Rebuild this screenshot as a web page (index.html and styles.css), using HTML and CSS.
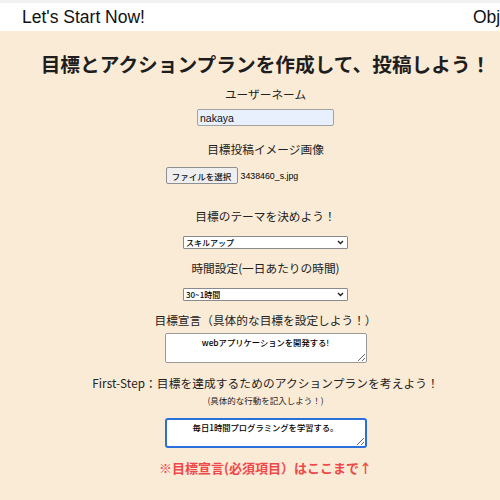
FILE: index.html
```html
<!DOCTYPE html>
<html lang="ja">
<head>
<meta charset="utf-8">
<title>Let's Start Now!</title>
<link rel="stylesheet" href="styles.css">
</head>
<body>
<div class="page">
  <header class="topbar">
    <span class="brand">Let's Start Now!</span>
    <span class="nav">Objective</span>
  </header>
  <main class="form">
    <h1 class="title">目標とアクションプランを作成して、投稿しよう！</h1>
    <p class="label l-user">ユーザーネーム</p>
    <input class="text-input" type="text" value="nakaya">
    <p class="label l-image">目標投稿イメージ画像</p>
    <div class="file">
      <button class="file-btn" type="button">ファイルを選択</button>
      <span class="file-name">3438460_s.jpg</span>
    </div>
    <p class="label l-theme">目標のテーマを決めよう！</p>
    <div class="select-wrap s-theme">
      <select class="select"><option>スキルアップ</option></select>
      <svg class="chev" width="7" height="5" viewBox="0 0 7 5"><path d="M1 1l2.5 2.5L6 1" fill="none" stroke="#222" stroke-width="1.4"/></svg>
    </div>
    <p class="label l-time">時間設定(一日あたりの時間)</p>
    <div class="select-wrap s-time">
      <select class="select"><option>30~1時間</option></select>
      <svg class="chev" width="7" height="5" viewBox="0 0 7 5"><path d="M1 1l2.5 2.5L6 1" fill="none" stroke="#222" stroke-width="1.4"/></svg>
    </div>
    <p class="label l-decl">目標宣言（具体的な目標を設定しよう！）</p>
    <textarea class="area a-decl">webアプリケーションを開発する!</textarea>
    <p class="label l-first">First-Step：目標を達成するためのアクションプランを考えよう！</p>
    <p class="note">(具体的な行動を記入しよう！)</p>
    <textarea class="area a-first">毎日1時間プログラミングを学習する。</textarea>
    <p class="warn">※目標宣言(必須項目）はここまで↑</p>
  </main>
</div>
</body>
</html>
```
FILE: styles.css
```css
html, body {
  margin: 0;
  padding: 0;
  overflow: hidden;
}
body {
  background: #faebd7;
  font-family: "Noto Sans CJK JP", "Liberation Sans", sans-serif;
  color: #222;
}
.page {
  width: 531px;
}
.topbar {
  background: #fff;
  border-top: 3px solid #f1f1f1;
  height: 28px;
  display: flex;
  align-items: center;
  gap: 328px;
  padding-left: 22px;
  white-space: nowrap;
  font-family: "Liberation Sans", Arial, sans-serif;
  font-size: 17.5px;
  color: #111;
}
.form {
  display: flex;
  flex-direction: column;
  align-items: center;
  padding-top: 20px;
}
.title {
  margin: 0;
  font-size: 19.7px;
  line-height: 26px;
  font-weight: 700;
  color: #1e1e1e;
  white-space: nowrap;
}
.label {
  margin: 0;
  font-size: 11.7px;
  line-height: 16px;
  white-space: nowrap;
}
.l-user { margin-top: 9px; }
.l-image { margin-top: 15px; }
.l-theme { margin-top: 24px; }
.l-time { margin-top: 11px; }
.l-decl { margin-top: 11px; }
.l-first { margin-top: 12px; letter-spacing: 0.1px; }

.text-input {
  margin: 7px 0 0;
  width: 137px;
  height: 17px;
  box-sizing: border-box;
  border: 1px solid #a3a3a3;
  border-radius: 2px;
  background: #e8f0fe;
  padding: 0 2px;
  font-family: "Liberation Sans", Arial, sans-serif;
  font-size: 10.5px;
  color: #111;
}
.file {
  margin-top: 10px;
  width: 200px;
  display: flex;
  align-items: center;
  gap: 3px;
}
.file-btn {
  width: 72px;
  height: 17px;
  box-sizing: border-box;
  margin: 0;
  padding: 0;
  border: 1px solid #8f8f8f;
  border-radius: 2px;
  background: #efefef;
  font-family: "Noto Sans CJK JP", sans-serif;
  font-size: 8.5px;
  font-weight: 500;
  color: #111;
}
.file-name {
  font-family: "Liberation Sans", Arial, sans-serif;
  font-size: 8.8px;
  color: #000;
}
.select-wrap {
  position: relative;
  margin-top: 12px;
  width: 165px;
  height: 13px;
}
.select {
  appearance: none;
  -webkit-appearance: none;
  display: block;
  width: 100%;
  height: 13px;
  box-sizing: border-box;
  margin: 0;
  padding: 0 2px;
  border: 1px solid #8a8a8a;
  border-radius: 1px;
  background: #fff;
  font-family: "Noto Sans CJK JP", sans-serif;
  font-size: 8px;
  font-weight: 500;
  line-height: 11px;
  color: #000;
}
.chev {
  position: absolute;
  right: 4px;
  top: 4px;
}
.area {
  display: block;
  width: 202px;
  height: 30px;
  box-sizing: border-box;
  margin: 5px 0 0;
  padding: 3px 4px 0;
  border: 1px solid #9a9a9a;
  border-radius: 2px;
  background: #fff;
  text-align: center;
  font-family: "Noto Sans CJK JP", sans-serif;
  font-size: 8.3px;
  font-weight: 500;
  line-height: 10px;
  color: #000;
}
.a-first {
  margin-top: 12px;
  border: 2px solid #2a6fdc;
  border-radius: 3px;
  padding-top: 2px;
}
.note {
  margin: 3px 0 0;
  font-size: 8.5px;
  line-height: 12px;
  white-space: nowrap;
}
.warn {
  margin: 10px 0 0;
  font-size: 13px;
  line-height: 20px;
  font-weight: 700;
  color: #f04848;
  white-space: nowrap;
}
```
